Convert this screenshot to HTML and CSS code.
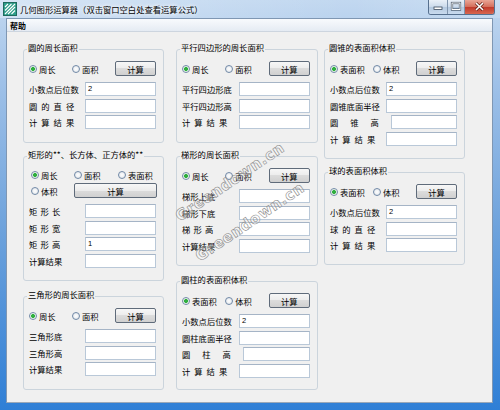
FILE: index.html
```html
<!DOCTYPE html>
<html lang="zh-CN">
<head>
  <meta charset="UTF-8">
  <title>几何图形运算器</title>
  <link rel="stylesheet" href="styles.css">
</head>
<body>
  <div class="window">
    <div class="titlebar">
      <svg class="app-icon" viewBox="0 0 14 14">
        <rect x="0.5" y="0.5" width="13" height="13" fill="#2f9e8a" stroke="#1f6a5e"/>
        <path d="M2 12 L12 2 M5 12 L12 5 M8.5 12 L12 8.5 M2 8.5 L8.5 2 M2 5 L5 2" stroke="#fff" stroke-width="1.1"/>
      </svg>
      <span class="title">几何图形运算器（双击窗口空白处查看运算公式）</span>
      <div class="caption">
        <span class="cap cap-min"><svg viewBox="0 0 18 13"><rect x="5" y="7" width="8" height="2.5" fill="#fff" stroke="#3b4a5c" stroke-width="0.8"/></svg></span>
        <span class="cap cap-max"><svg viewBox="0 0 16 13"><rect x="4" y="3" width="8" height="6.5" fill="none" stroke="#3b4a5c" stroke-width="2.2"/><rect x="4" y="3" width="8" height="6.5" fill="none" stroke="#fff" stroke-width="1"/></svg></span>
        <span class="cap cap-close"><svg viewBox="0 0 29 13"><path d="M11 3 L18 10 M18 3 L11 10" stroke="#5a1a12" stroke-width="3"/><path d="M11 3 L18 10 M18 3 L11 10" stroke="#fff" stroke-width="1.6"/></svg></span>
      </div>
    </div>

    <div class="frame-body">
      <div class="menubar"><span class="menu-item">帮助</span></div>

      <div class="client">
        <!-- left column -->
        <div class="col col-1">
          <div class="group g-circle">
            <div class="group-title">圆的周长面积</div>
            <div class="opts">
              <label class="opt"><span class="radio checked"></span>周长</label>
              <label class="opt"><span class="radio"></span>面积</label>
              <button class="btn">计算</button>
            </div>
            <div class="fields">
              <div class="field"><span>小数点后位数</span><span class="input">2</span></div>
              <div class="field"><span class="wide">圆的直径</span><span class="input"></span></div>
              <div class="field"><span class="wide">计算结果</span><span class="input"></span></div>
            </div>
          </div>

          <div class="group g-rect">
            <div class="group-title">矩形的**、长方体、正方体的**</div>
            <div class="opts-grid">
              <label class="opt"><span class="radio checked"></span>周长</label>
              <label class="opt"><span class="radio"></span>面积</label>
              <label class="opt"><span class="radio"></span>表面积</label>
              <label class="opt"><span class="radio"></span>体积</label>
              <button class="btn btn-long">计算</button>
            </div>
            <div class="fields">
              <div class="field"><span class="wide-s">矩形长</span><span class="input"></span></div>
              <div class="field"><span class="wide-s">矩形宽</span><span class="input"></span></div>
              <div class="field"><span class="wide-s">矩形高</span><span class="input">1</span></div>
              <div class="field"><span>计算结果</span><span class="input"></span></div>
            </div>
          </div>

          <div class="group g-tri">
            <div class="group-title">三角形的周长面积</div>
            <div class="opts">
              <label class="opt"><span class="radio checked"></span>周长</label>
              <label class="opt"><span class="radio"></span>面积</label>
              <button class="btn">计算</button>
            </div>
            <div class="fields">
              <div class="field"><span>三角形底</span><span class="input"></span></div>
              <div class="field"><span>三角形高</span><span class="input"></span></div>
              <div class="field"><span>计算结果</span><span class="input"></span></div>
            </div>
          </div>
        </div>

        <!-- middle column -->
        <div class="col col-2">
          <div class="group g-para">
            <div class="group-title">平行四边形的周长面积</div>
            <div class="opts">
              <label class="opt"><span class="radio checked"></span>周长</label>
              <label class="opt"><span class="radio"></span>面积</label>
              <button class="btn">计算</button>
            </div>
            <div class="fields">
              <div class="field"><span>平行四边形底</span><span class="input"></span></div>
              <div class="field"><span>平行四边形高</span><span class="input"></span></div>
              <div class="field"><span class="wide">计算结果</span><span class="input"></span></div>
            </div>
          </div>

          <div class="group g-trap">
            <div class="group-title">梯形的周长面积</div>
            <div class="opts">
              <label class="opt"><span class="radio checked"></span>周长</label>
              <label class="opt"><span class="radio"></span>面积</label>
              <button class="btn">计算</button>
            </div>
            <div class="fields">
              <div class="field"><span>梯形上底</span><span class="input"></span></div>
              <div class="field"><span>梯形下底</span><span class="input"></span></div>
              <div class="field"><span class="wide-s">梯形高</span><span class="input"></span></div>
              <div class="field"><span>计算结果</span><span class="input"></span></div>
            </div>
          </div>

          <div class="group g-cyl">
            <div class="group-title">圆柱的表面积体积</div>
            <div class="opts">
              <label class="opt"><span class="radio checked"></span>表面积</label>
              <label class="opt"><span class="radio"></span>体积</label>
              <button class="btn">计算</button>
            </div>
            <div class="fields">
              <div class="field"><span>小数点后位数</span><span class="input">2</span></div>
              <div class="field"><span>圆柱底面半径</span><span class="input"></span></div>
              <div class="field"><span class="wider">圆柱高</span><span class="input"></span></div>
              <div class="field"><span class="wide">计算结果</span><span class="input"></span></div>
            </div>
          </div>
        </div>

        <!-- right column -->
        <div class="col col-3">
          <div class="group g-cone">
            <div class="group-title">圆锥的表面积体积</div>
            <div class="opts">
              <label class="opt"><span class="radio checked"></span>表面积</label>
              <label class="opt"><span class="radio"></span>体积</label>
              <button class="btn">计算</button>
            </div>
            <div class="fields">
              <div class="field"><span>小数点后位数</span><span class="input">2</span></div>
              <div class="field"><span>圆锥底面半径</span><span class="input"></span></div>
              <div class="field"><span class="wider">圆锥高</span><span class="input"></span></div>
              <div class="field"><span class="wide">计算结果</span><span class="input"></span></div>
            </div>
          </div>

          <div class="group g-sphere">
            <div class="group-title">球的表面积体积</div>
            <div class="opts">
              <label class="opt"><span class="radio checked"></span>表面积</label>
              <label class="opt"><span class="radio"></span>体积</label>
              <button class="btn">计算</button>
            </div>
            <div class="fields">
              <div class="field"><span>小数点后位数</span><span class="input">2</span></div>
              <div class="field"><span class="wide">球的直径</span><span class="input"></span></div>
              <div class="field"><span class="wide">计算结果</span><span class="input"></span></div>
            </div>
          </div>
        </div>
      </div>
    </div>

    <div class="watermark wm-1">Greendown.cn</div>
    <div class="watermark wm-2">Greendown.cn</div>
  </div>
</body>
</html>
```

FILE: styles.css
```css
body {
  margin: 0;
  font-family: "Noto Sans CJK SC", "Noto Sans", sans-serif;
  font-size: 8.3px;
  color: #000;
}

.window {
  position: relative;
  width: 500px;
  height: 410px;
  overflow: hidden;
  display: flex;
  flex-direction: column;
  background: linear-gradient(#c2d8f0, #9fc1e8 20%, #6fa3dc 55%, #2f7fd6);
}

/* title bar */
.titlebar {
  position: relative;
  height: 18px;
  display: flex;
  align-items: center;
  background: linear-gradient(to right, rgba(255,255,255,.35), rgba(255,255,255,.1) 45%, rgba(255,255,255,0) 70%, rgba(255,255,255,.15));
}

.app-icon {
  width: 14px;
  height: 14px;
  margin-left: 3px;
}

.title {
  margin-left: 3px;
  line-height: 12px;
  text-shadow: 0 0 4px #fff, 0 0 4px #fff;
}

.caption {
  position: absolute;
  top: 0;
  right: 5px;
  display: flex;
  height: 14px;
  border: 1px solid #56708f;
  border-top: none;
  border-radius: 0 0 3px 3px;
  overflow: hidden;
}

.cap {
  display: block;
  height: 14px;
}

.cap svg {
  display: block;
  width: 100%;
  height: 13px;
}

.cap-min { width: 18px; background: linear-gradient(#e9f0f8, #cbdaeb 50%, #b3c8df 50%, #c9dbef); border-right: 1px solid #7f94ad; }
.cap-max { width: 16px; background: linear-gradient(#e9f0f8, #cbdaeb 50%, #b3c8df 50%, #c9dbef); border-right: 1px solid #7f94ad; }
.cap-close { width: 29px; background: linear-gradient(#e9a596, #d46d5a 50%, #c0392b 50%, #d8664f); }

/* frame and menu */
.frame-body {
  flex: 1;
  display: flex;
  flex-direction: column;
  margin: 0 7px 7px 6px;
  border: 1px solid #7f97b3;
  border-bottom: 1px solid #9aa8b8;
}

.menubar {
  height: 12px;
  line-height: 12px;
  padding-left: 2px;
  background: linear-gradient(#f8fafd, #e5ebf3);
  border-bottom: 1px solid #cdd5df;
}

.menu-item {
  font-size: 8px;
  font-weight: bold;
  margin-left: 1px;
}

.client {
  flex: 1;
  display: flex;
  align-items: flex-start;
  padding: 17px 0 0 16px;
  background: #f0f0f0;
}

.col {
  display: flex;
  flex-direction: column;
}

.col-1 { width: 141px; }
.col-2 { width: 142px; margin-left: 12px; }
.col-3 { width: 141px; margin-left: 6px; }

/* group boxes */
.group {
  box-sizing: border-box;
  border: 1px solid #cbd4dc;
  border-radius: 3px;
  padding: 0 7px 0 5px;
}

.group + .group { margin-top: 13px; }
.group:nth-child(3) { margin-top: 15px; }

.g-circle { height: 94px; }
.g-rect { height: 125px; }
.g-tri { height: 94px; }
.g-para { height: 94px; }
.g-trap { height: 110px; }
.g-cyl { height: 109px; }
.g-cone { height: 110px; }
.g-sphere { height: 93px; }

.group-title {
  display: table;
  height: 11px;
  line-height: 11px;
  margin: -8px 0 0 -2px;
  padding: 0 1px;
  background: #f0f0f0;
  white-space: nowrap;
}

.opts {
  display: flex;
  align-items: center;
  height: 15px;
  margin-top: 8px;
}

.opts-grid {
  display: grid;
  grid-template-columns: 43px 44px 1fr;
  grid-template-rows: 15px 15px;
  row-gap: 1px;
  align-items: center;
  margin-top: 7px;
  padding-left: 2px;
}

.opt {
  display: flex;
  align-items: center;
  width: 44px;
  white-space: nowrap;
}

.radio {
  box-sizing: border-box;
  width: 8px;
  height: 8px;
  margin-right: 2px;
  border: 1px solid #7189a6;
  border-radius: 50%;
  background: radial-gradient(circle at 50% 50%, #fff, #dde2e8);
}

.radio.checked {
  background: radial-gradient(circle at 50% 50%, #2fae3f 0, #2fae3f 1.6px, #cfeccf 2.2px, #fff 3px);
}

.btn {
  margin-left: auto;
  width: 42px;
  height: 15px;
  padding: 0;
  font: inherit;
  color: #000;
  border: 1px solid #5f6b7a;
  border-radius: 2px;
  background: linear-gradient(#f7f7f7, #ececec 50%, #dcdcdc 50%, #d0d0d0);
}

.btn-long {
  grid-column: 2 / 4;
  width: 83px;
  margin-left: 0;
}

.fields {
  margin-top: 6px;
}

.field {
  display: flex;
  justify-content: space-between;
  align-items: center;
  height: 14px;
  margin-bottom: 2.5px;
  white-space: nowrap;
}

.wide { letter-spacing: 4px; }
.wide-s { letter-spacing: 3.2px; }
.wider { letter-spacing: 12px; }

.input {
  box-sizing: border-box;
  width: 71px;
  height: 14px;
  line-height: 12px;
  padding-left: 2px;
  font-family: "Liberation Sans", sans-serif;
  font-size: 7.5px;
  background: #fff;
  border: 1px solid #b9c8d8;
  border-top-color: #a5b4c6;
}

/* site watermark lying over the window */
.watermark {
  position: absolute;
  font-family: "DejaVu Sans", sans-serif;
  font-size: 15px;
  font-weight: bold;
  letter-spacing: 0.5px;
  color: rgba(255,255,255,.3);
  -webkit-text-stroke: 0.6px #8e8e8e;
  transform-origin: 0 100%;
  transform: rotate(-34deg);
  white-space: nowrap;
}

.wm-1 { left: 182px; top: 207px; }
.wm-2 { left: 202px; top: 247px; }
```
